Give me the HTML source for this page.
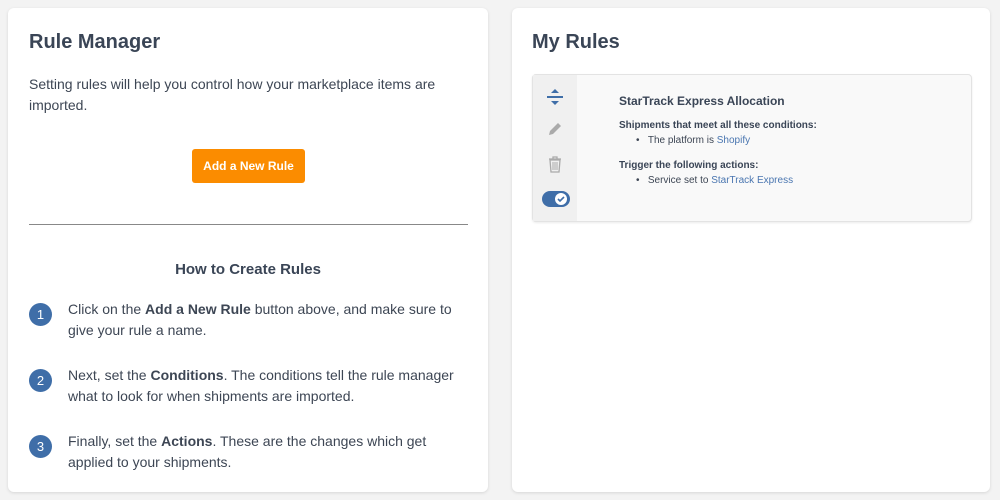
<!DOCTYPE html><html><head><style>
body{margin:0;background:#f3f3f3;font-family:"Liberation Sans",sans-serif;color:#3d4654;width:1000px;height:500px;overflow:hidden;position:relative}
.card{position:absolute;background:#fff;border-radius:6px;box-shadow:0 1px 3px rgba(0,0,0,.12)}
h1{position:absolute;margin:0;font-size:20px;font-weight:bold;color:#3a4556}
.p{position:absolute;font-size:14px;line-height:21px;color:#3d4654}
.num{position:absolute;width:23px;height:23px;border-radius:50%;background:#3f6ea8;color:#fff;font-size:13px;text-align:center;line-height:23px}
a{color:#4a76b0;text-decoration:none}
</style></head><body>
<div class="card" style="left:8px;top:8px;width:480px;height:484px">
<h1 style="left:21px;top:23px">Rule Manager</h1>
<div class="p" style="left:21px;top:66px;width:440px">Setting rules will help you control how your marketplace items are imported.</div>
<div style="position:absolute;left:184px;top:141px;width:113px;height:34px;background:#fb8c00;border-radius:3px;color:#fff;font-size:12px;font-weight:bold;text-align:center;line-height:34px">Add a New Rule</div>
<div style="position:absolute;left:21px;top:216px;width:439px;height:1px;background:#888"></div>
<div style="position:absolute;left:0;width:480px;top:253px;text-align:center;font-size:15px;font-weight:bold;color:#3a4556">How to Create Rules</div>
<div class="num" style="left:21px;top:295px">1</div>
<div class="p" style="left:60px;top:291px;width:400px">Click on the <b>Add a New Rule</b> button above, and make sure to give your rule a name.</div>
<div class="num" style="left:21px;top:361px">2</div>
<div class="p" style="left:60px;top:357px;width:400px">Next, set the <b>Conditions</b>. The conditions tell the rule manager what to look for when shipments are imported.</div>
<div class="num" style="left:21px;top:427px">3</div>
<div class="p" style="left:60px;top:423px;width:400px">Finally, set the <b>Actions</b>. These are the changes which get applied to your shipments.</div>
</div>
<div class="card" style="left:512px;top:8px;width:478px;height:484px">
<h1 style="left:20px;top:23px">My Rules</h1>
<div style="position:absolute;left:20px;top:66px;width:438px;height:146px;border:1px solid #e3e3e3;border-radius:4px;background:#f9f9f9;box-shadow:0 1px 2px rgba(0,0,0,.08)">
<div style="position:absolute;left:0;top:0;width:44px;height:146px;background:#f0f0f0"></div>
<svg style="position:absolute;left:14px;top:14px" width="16" height="16" viewBox="0 0 16 16"><path d="M4 4h8L8 0z M4 12h8l-4 4z" fill="#3f6ea8"/><rect x="0" y="7" width="16" height="2" fill="#3f6ea8"/></svg>
<svg style="position:absolute;left:15px;top:47px" width="14" height="14" viewBox="0 0 14 14"><path d="M1 13l1-4 8-8 3 3-8 8z" fill="#aaa"/></svg>
<svg style="position:absolute;left:15px;top:81px" width="14" height="17" viewBox="0 0 14 17"><path d="M1 3h12M5 3V1h4v2M2 4h10l-1 12H3z" stroke="#aaa" fill="none" stroke-width="1.3"/><path d="M5 6v8M7 6v8M9 6v8" stroke="#aaa"/></svg>
<div style="position:absolute;left:9px;top:116px;width:28px;height:16px;border-radius:8px;background:#3f6ea8"></div>
<div style="position:absolute;left:22px;top:118px;width:12px;height:12px;border-radius:50%;background:#fff"></div>
<svg style="position:absolute;left:22px;top:118px" width="12" height="12"><path d="M3 6l2 2 4-4" stroke="#3f6ea8" stroke-width="1.6" fill="none"/></svg>
<div style="position:absolute;left:86px;top:19px;font-size:12px;font-weight:bold;color:#3a4556">StarTrack Express Allocation</div>
<div style="position:absolute;left:86px;top:45px;font-size:10px;font-weight:bold;color:#3a4556">Shipments that meet all these conditions:</div>
<div style="position:absolute;left:103px;top:60px;font-size:10px">•&nbsp;&nbsp;&nbsp;The platform is <a>Shopify</a></div>
<div style="position:absolute;left:86px;top:85px;font-size:10px;font-weight:bold;color:#3a4556">Trigger the following actions:</div>
<div style="position:absolute;left:103px;top:100px;font-size:10px">•&nbsp;&nbsp;&nbsp;Service set to <a>StarTrack Express</a></div>
</div>
</div>
</body></html>
